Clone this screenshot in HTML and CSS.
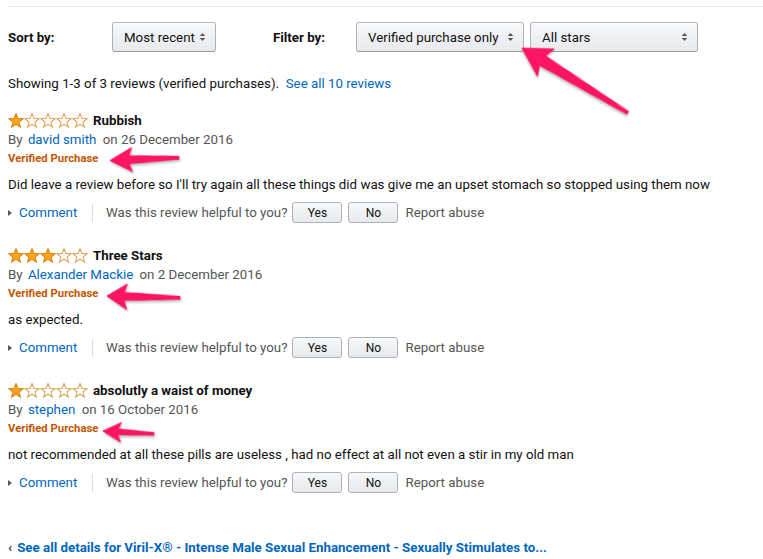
FILE: index.html
```html
<!DOCTYPE html>
<html>
<head>
<meta charset="utf-8">
<link rel="stylesheet" href="styles.css">
</head>
<body>
<svg class="defs" width="0" height="0">
  <defs>
    <symbol id="star" viewBox="0 -0.5 16 15">
      <polygon points="8,0 9.88,4.91 15.13,5.18 11.04,8.49 12.41,13.57 8,10.7 3.59,13.57 4.96,8.49 0.87,5.18 6.12,4.91"/>
    </symbol>
    <symbol id="updown" viewBox="0 0 7 10">
      <polygon points="0.8,4 3.5,1 6.2,4"/>
      <polygon points="0.8,6 3.5,9 6.2,6"/>
    </symbol>
  </defs>
</svg>
<div class="page">
  <div class="rule"></div>
  <div class="controls">
    <span class="label sort-label">Sort by:</span>
    <span class="select sel-recent">Most recent <svg class="ud"><use href="#updown"/></svg></span>
    <span class="label filter-label">Filter by:</span>
    <span class="select sel-wide">Verified purchase only <svg class="ud"><use href="#updown"/></svg></span>
    <span class="select sel-wide sel-stars">All stars <svg class="ud"><use href="#updown"/></svg></span>
  </div>
  <div class="showing">Showing 1-3 of 3 reviews (verified purchases).&nbsp; <a class="link">See all 10 reviews</a></div>

  <div class="review">
    <div class="title-row">
      <span class="stars">
        <svg class="s on"><use href="#star"/></svg><svg class="s"><use href="#star"/></svg><svg class="s"><use href="#star"/></svg><svg class="s"><use href="#star"/></svg><svg class="s"><use href="#star"/></svg>
      </span>
      <span class="title">Rubbish</span>
    </div>
    <div class="by">By <a class="link author">david smith</a> on 26 December 2016</div>
    <div class="vp">Verified Purchase</div>
    <div class="body">Did leave a review before so I'll try again all these things did was give me an upset stomach so stopped using them now</div>
    <div class="actions">
      <span class="tri"></span><a class="link comment">Comment</a>
      <span class="divider"></span>
      <span class="helpful">Was this review helpful to you?</span>
      <span class="btn">Yes</span><span class="btn">No</span>
      <span class="report">Report abuse</span>
    </div>
  </div>

  <div class="review">
    <div class="title-row">
      <span class="stars">
        <svg class="s on"><use href="#star"/></svg><svg class="s on"><use href="#star"/></svg><svg class="s on"><use href="#star"/></svg><svg class="s"><use href="#star"/></svg><svg class="s"><use href="#star"/></svg>
      </span>
      <span class="title">Three Stars</span>
    </div>
    <div class="by">By <a class="link author">Alexander Mackie</a> on 2 December 2016</div>
    <div class="vp">Verified Purchase</div>
    <div class="body">as expected.</div>
    <div class="actions">
      <span class="tri"></span><a class="link comment">Comment</a>
      <span class="divider"></span>
      <span class="helpful">Was this review helpful to you?</span>
      <span class="btn">Yes</span><span class="btn">No</span>
      <span class="report">Report abuse</span>
    </div>
  </div>

  <div class="review">
    <div class="title-row">
      <span class="stars">
        <svg class="s on"><use href="#star"/></svg><svg class="s"><use href="#star"/></svg><svg class="s"><use href="#star"/></svg><svg class="s"><use href="#star"/></svg><svg class="s"><use href="#star"/></svg>
      </span>
      <span class="title">absolutly a waist of money</span>
    </div>
    <div class="by">By <a class="link author">stephen</a> on 16 October 2016</div>
    <div class="vp">Verified Purchase</div>
    <div class="body">not recommended at all these pills are useless , had no effect at all not even a stir in my old man</div>
    <div class="actions">
      <span class="tri"></span><a class="link comment">Comment</a>
      <span class="divider"></span>
      <span class="helpful">Was this review helpful to you?</span>
      <span class="btn">Yes</span><span class="btn">No</span>
      <span class="report">Report abuse</span>
    </div>
  </div>

  <div class="back"><span class="chev">‹</span><a class="link">See all details for Viril-X® - Intense Male Sexual Enhancement - Sexually Stimulates to...</a></div>
</div>

<svg class="arrows" width="763" height="559" viewBox="0 0 763 559">
  <g class="arrow" transform="translate(522,48) rotate(31.5)">
    <polygon points="0,0 28,-16 24,-5.5 124,-1.6 124,1.6 24,5.5 28,16"/>
  </g>
  <g class="arrow" transform="translate(110,160.5) rotate(-2.3)">
    <polygon points="0,0 22,-12 19,-4 69,-1.4 69,1.4 19,4 22,12"/>
  </g>
  <g class="arrow" transform="translate(107,296) rotate(1.4)">
    <polygon points="0,0 20,-12.5 17,-4 73,-1.4 73,1.4 17,4 20,13"/>
  </g>
  <g class="arrow" transform="translate(103,431) rotate(3.2)">
    <polygon points="0,0 18,-9.5 15,-3 51,-1.2 51,1.2 15,3 18,10"/>
  </g>
</svg>
</body>
</html>
```
FILE: styles.css
```css
html, body { margin: 0; padding: 0; background: #fff; }
body {
  font-family: Roboto, "Liberation Sans", Arial, sans-serif;
  font-size: 13.3px;
  color: #111;
  position: relative;
  width: 763px;
  height: 559px;
  overflow: hidden;
}
.defs { position: absolute; }
.page { padding: 6px 0 0 8px; }
.rule { border-top: 1px solid #e7e7e7; }
.link { color: #0066c0; text-decoration: none; }

.controls { display: flex; align-items: center; margin-top: 15px; height: 30px; }
.label { font-weight: 700; }
.sort-label { width: 104px; }
.filter-label { width: 83px; margin-left: 57px; }
.select {
  box-sizing: border-box;
  height: 30px;
  display: flex;
  align-items: center;
  justify-content: space-between;
  padding: 0 9px 0 11px;
  border: 1px solid #adb1b8;
  border-top-color: #b5b8bd;
  border-bottom-color: #9a9da3;
  border-radius: 3px;
  background: linear-gradient(#f7f8fa, #e7e9ec);
  box-shadow: inset 0 1px 0 rgba(255,255,255,.6);
  color: #111;
}
.sel-recent { width: 104px; }
.sel-wide { width: 168px; }
.sel-stars { margin-left: 6px; }
.ud { width: 7px; height: 10px; fill: #555; }

.showing { margin-top: 23px; line-height: 18px; }

.review { margin-top: 18px; }
.review + .review { margin-top: 23px; }
.title-row { display: flex; align-items: center; height: 19px; }
.stars { display: flex; width: 80px; margin-right: 5px; }
.s { width: 16px; height: 15px; fill: #fff; stroke: #dea85e; stroke-width: 1.1; }
.s.on { fill: #ffa41c; stroke: #d98a1c; }
.title { font-weight: 700; }
.by { line-height: 19px; color: #555; }
.author { margin: 0 3px 0 2px; }
.vp { line-height: 19px; font-size: 11.3px; font-weight: 700; color: #c45500; }
.body { margin-top: 7px; line-height: 19px; }
.actions { display: flex; align-items: center; margin-top: 8px; height: 21px; }
.tri {
  width: 0; height: 0;
  border-left: 4px solid #555;
  border-top: 3.5px solid transparent;
  border-bottom: 3.5px solid transparent;
  margin-right: 7px;
}
.comment { width: 73px; }
.divider { width: 1px; height: 18px; background: #ddd; margin-right: 13px; }
.helpful { color: #555; margin-right: 5px; }
.btn {
  box-sizing: border-box;
  width: 50px; height: 21px;
  display: flex; align-items: center; justify-content: center;
  font-size: 12px;
  border: 1px solid #adb1b8;
  border-radius: 3px;
  background: linear-gradient(#f7f8fa, #e7e9ec);
  margin-right: 6px;
  color: #111;
}
.report { color: #555; margin-left: 1px; }

.back { margin-top: 46px; line-height: 18px; font-weight: 700; }
.chev { color: #333; margin-right: 5px; }

.arrows { position: absolute; left: 0; top: 0; pointer-events: none; }
.arrow polygon { fill: #fe1464; stroke: #fe1464; stroke-width: 1; stroke-linejoin: round; filter: drop-shadow(1px 2px 1px rgba(0,0,0,.25)); }
```
